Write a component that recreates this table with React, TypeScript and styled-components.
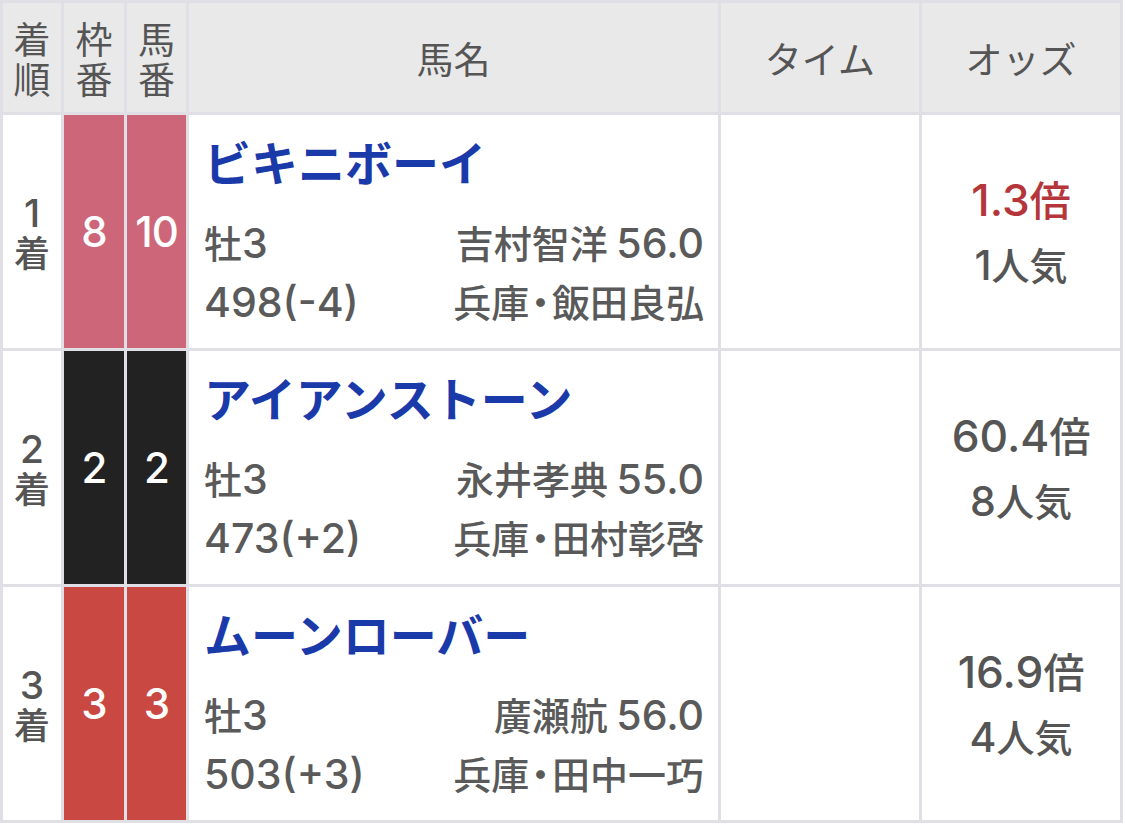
import React from 'react';
import styled, { createGlobalStyle } from 'styled-components';

const Global = createGlobalStyle`
  html, body { margin: 0; padding: 0; background: #ffffff; }
  body {
    font-family: "Noto Sans CJK JP", "Noto Sans", sans-serif;
    color: #5a5a5a;
  }
`;

const Table = styled.div`
  display: grid;
  grid-template-columns: 58px 60px 59px 529px 198px 198px;
  grid-template-rows: 109px repeat(3, 233px);
  gap: 3px;
  padding: 3px;
  width: 1123px;
  box-sizing: border-box;
  background: #dfdfe5;
`;

const HeadCell = styled.div`
  background: #e9e9e9;
  display: flex;
  align-items: center;
  justify-content: center;
  text-align: center;
  font-size: 37px;
  line-height: 40px;
  color: #555555;
`;

const StackText = styled.div`
  display: flex;
  flex-direction: column;
  align-items: center;
`;

const Latin = styled.span`
  font-family: Inter, "Noto Sans", sans-serif;
  font-size: 1.08em;
`;

const Dot = styled.span`
  margin: 0 -0.2em;
`;

function Mixed({ text }: { text: string }) {
  const parts = text.split(/([0-9.()+\-]+|・)/);
  return (
    <>
      {parts.map((p, i) => {
        if (p === '') return null;
        if (p === '・') return <Dot key={i}>・</Dot>;
        if (/^[0-9.()+\-]+$/.test(p)) return <Latin key={i}>{p}</Latin>;
        return <React.Fragment key={i}>{p}</React.Fragment>;
      })}
    </>
  );
}

const RankCell = styled.div`
  background: #ffffff;
  display: flex;
  flex-direction: column;
  align-items: center;
  justify-content: center;
  font-size: 36px;
  line-height: 39px;
  font-weight: 500;
  color: #555555;
`;

const FrameCell = styled.div<{ $bg: string }>`
  background: ${p => p.$bg};
  display: flex;
  align-items: center;
  justify-content: center;
  color: #ffffff;
  font-family: Inter, "Noto Sans", sans-serif;
  font-size: 42px;
  font-weight: 500;
  letter-spacing: -1px;
`;

const HorseCell = styled.div`
  background: #ffffff;
  padding: 16px 14px 0 15px;
  display: flex;
  flex-direction: column;
`;

const HorseName = styled.div`
  font-size: 47px;
  font-weight: 700;
  line-height: 60px;
  color: #1a3aaa;
`;

const InfoRow = styled.div<{ $first?: boolean }>`
  display: flex;
  justify-content: space-between;
  font-size: 38px;
  font-weight: 500;
  line-height: 57px;
  color: #5a5a5a;
  margin-top: ${p => (p.$first ? '22px' : '0')};
`;

const BlankCell = styled.div`
  background: #ffffff;
`;

const OddsCell = styled.div`
  background: #ffffff;
  display: flex;
  flex-direction: column;
  align-items: center;
  justify-content: center;
  font-weight: 500;
`;

const Odds = styled.div<{ $hot?: boolean }>`
  font-size: 41px;
  line-height: 64px;
  color: ${p => (p.$hot ? '#b5363a' : '#555555')};
`;

const Pop = styled.div`
  font-size: 38px;
  line-height: 64px;
  color: #555555;
`;

type Horse = {
  rank: number;
  frame: number;
  num: number;
  frameColor: string;
  name: string;
  sexAge: string;
  jockey: string;
  weight: string;
  stable: string;
  odds: string;
  pop: number;
};

const horses: Horse[] = [
  { rank: 1, frame: 8, num: 10, frameColor: '#cd6679', name: 'ビキニボーイ', sexAge: '牡3', jockey: '吉村智洋 56.0', weight: '498(-4)', stable: '兵庫・飯田良弘', odds: '1.3倍', pop: 1 },
  { rank: 2, frame: 2, num: 2, frameColor: '#222222', name: 'アイアンストーン', sexAge: '牡3', jockey: '永井孝典 55.0', weight: '473(+2)', stable: '兵庫・田村彰啓', odds: '60.4倍', pop: 8 },
  { rank: 3, frame: 3, num: 3, frameColor: '#c94841', name: 'ムーンローバー', sexAge: '牡3', jockey: '廣瀬航 56.0', weight: '503(+3)', stable: '兵庫・田中一巧', odds: '16.9倍', pop: 4 },
];

export default function App() {
  return (
    <>
      <Global />
      <Table>
        <HeadCell><StackText><span>着</span><span>順</span></StackText></HeadCell>
        <HeadCell><StackText><span>枠</span><span>番</span></StackText></HeadCell>
        <HeadCell><StackText><span>馬</span><span>番</span></StackText></HeadCell>
        <HeadCell>馬名</HeadCell>
        <HeadCell>タイム</HeadCell>
        <HeadCell>オッズ</HeadCell>
        {horses.map(h => (
          <React.Fragment key={h.rank}>
            <RankCell>
              <span><Latin>{h.rank}</Latin></span>
              <span>着</span>
            </RankCell>
            <FrameCell $bg={h.frameColor}>{h.frame}</FrameCell>
            <FrameCell $bg={h.frameColor}>{h.num}</FrameCell>
            <HorseCell>
              <HorseName>{h.name}</HorseName>
              <InfoRow $first>
                <span><Mixed text={h.sexAge} /></span>
                <span><Mixed text={h.jockey} /></span>
              </InfoRow>
              <InfoRow>
                <span><Mixed text={h.weight} /></span>
                <span><Mixed text={h.stable} /></span>
              </InfoRow>
            </HorseCell>
            <BlankCell />
            <OddsCell>
              <Odds $hot={h.pop === 1}><Mixed text={h.odds} /></Odds>
              <Pop><Mixed text={`${h.pop}人気`} /></Pop>
            </OddsCell>
          </React.Fragment>
        ))}
      </Table>
    </>
  );
}
